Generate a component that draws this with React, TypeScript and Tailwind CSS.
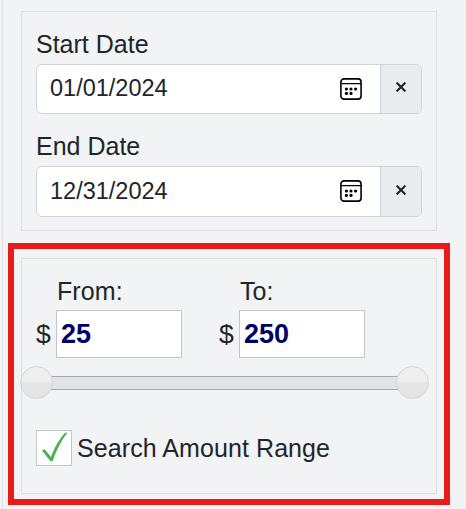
import { useState } from "react"

type DateFieldProps = {
    label: string;
    value: string;
    fieldClass: string;
    textClass: string;
};

type AmountFieldProps = {
    label: string;
    value: string;
    onChange: (value: string) => void;
};

const CalendarIcon = () => (
    <svg width="22" height="22" viewBox="0 0 22 22" fill="none" stroke="#000">
        <rect x="0.9" y="0.9" width="20.2" height="20.2" rx="3.2" strokeWidth="1.6" />
        <path d="M1 5.6h20" strokeWidth="1.3" />
        <g fill="#000" stroke="none">
            <circle cx="6.4" cy="11" r="1.6" />
            <circle cx="11" cy="11" r="1.6" />
            <circle cx="15.6" cy="11" r="1.6" />
            <circle cx="6.4" cy="15.4" r="1.6" />
            <circle cx="11" cy="15.4" r="1.6" />
        </g>
    </svg>
)

const DateField = ({ label, value, fieldClass, textClass }: DateFieldProps) => (
    <div>
        <div className="h-[38px] leading-[37px]">{label}</div>
        <div className={`flex overflow-hidden rounded-md border border-[#ced4da] bg-white ${fieldClass}`}>
            <div className={`flex-1 pl-[13px] text-[23.5px] ${textClass}`}>{value}</div>
            <div className="w-[40px] pt-[13px]">
                <CalendarIcon />
            </div>
            <button type="button" className="flex w-[41px] items-center justify-center border-l border-[#ced4da] bg-[#e9ecef] pb-[4px]">
                <svg width="10" height="10" viewBox="0 0 10 10" stroke="#212529" strokeWidth="2.1">
                    <path d="M0.6 0.6l8.8 8.8M9.4 0.6l-8.8 8.8" />
                </svg>
            </button>
        </div>
    </div>
)

const AmountField = ({ label, value, onChange }: AmountFieldProps) => (
    <label className="block w-[183px]">
        <span className="block h-[37px] pl-[21px] leading-[37px] tracking-[0.1px]">{label}</span>
        <span className="flex">
            <span className="w-[20px] text-[26.5px] leading-[48px]">$</span>
            <input
                className="h-[48px] w-[126px] border border-[#c5c5c5] bg-white pl-[4px] text-[27px] font-bold text-[#000066] outline-none"
                value={value}
                onChange={(e) => onChange(e.target.value)}
            />
        </span>
    </label>
)

const SliderHandle = () => (
    <span className="size-[33px] rounded-full border border-[#d3d3d3] bg-linear-to-b from-[#eeeeee] from-50% to-[#e5e5e5] to-50%" />
)

export default function App() {
    const [from, setFrom] = useState("25");
    const [to, setTo] = useState("250");
    const [checked, setChecked] = useState(true);

    return (
        <div className="flex h-[509px] w-[466px] overflow-hidden bg-[#f1f3f5] pl-[2px] font-['Liberation_Sans',Arial,sans-serif] text-[25px] text-[#212529]">
            <div className="flex-1 border-l border-[#dfe1e2] pt-[11px] pl-[5px]">
                <div className="ml-[13px] flex h-[220px] w-[416px] flex-col gap-[14px] border border-[#dcdfe2] px-[14px] pt-[14px]">
                    <DateField label="Start Date" value="01/01/2024" fieldClass="h-[50px]" textClass="leading-[46px]" />
                    <DateField label="End Date" value="12/31/2024" fieldClass="h-[51px]" textClass="leading-[48px]" />
                </div>
                <div className="mt-[12px] h-[262px] w-[442px] border-6 border-[#e81a1a] pt-[9px] pl-[7px]">
                    <div className="h-[236px] w-[416px] border border-[#dcdfe2] px-[14px] pt-[14px]">
                        <div className="flex">
                            <AmountField label="From:" value={from} onChange={setFrom} />
                            <AmountField label="To:" value={to} onChange={setTo} />
                        </div>
                        <div className="mt-[8px] -ml-[16px] grid w-[409px] items-center">
                            <div className="col-start-1 row-start-1 mx-4 h-[14px] border-y border-[#a8a8aa] bg-[#e3e3e3]" />
                            <div className="z-10 col-start-1 row-start-1 flex justify-between">
                                <SliderHandle />
                                <SliderHandle />
                            </div>
                        </div>
                        <div className="mt-[31px] flex items-center">
                            <button
                                type="button"
                                className="size-[36px] border border-[#c5c5c5] bg-white"
                                onClick={() => setChecked(!checked)}
                            >
                                {checked && (
                                    <svg width="34" height="34" viewBox="0 0 34 34" fill="#4caf50">
                                        <path d="M5 19.4L7.6 18.2L14 26C17.4 16.5 22.5 8 28 1.8H30.4C24.5 9.5 19.3 19 15.7 30H13.2Z" />
                                    </svg>
                                )}
                            </button>
                            <span className="pl-[5px] leading-[36px] tracking-[0.08px]">Search Amount Range</span>
                        </div>
                    </div>
                </div>
            </div>
        </div>
    )
}
